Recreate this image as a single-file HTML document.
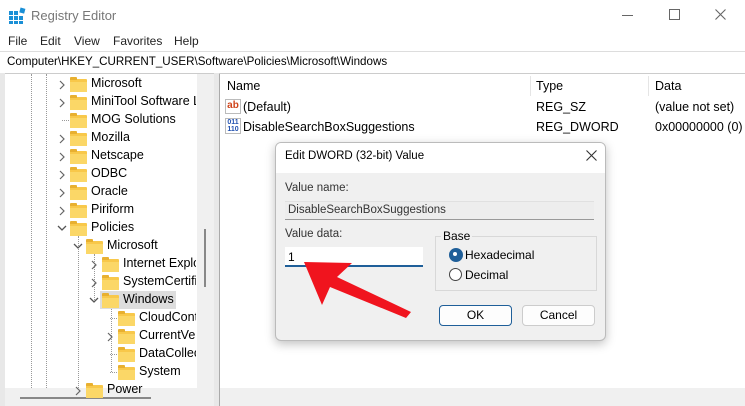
<!DOCTYPE html><html><head><style>
body{margin:0;width:745px;height:406px;overflow:hidden;background:#fff;font-family:"Liberation Sans",sans-serif;font-size:11.5px;color:#000;position:relative}
.a{position:absolute;white-space:nowrap}
.f{position:absolute;width:17px;height:13px;background:#f8c84a;border-radius:1px}
.f:before{content:"";position:absolute;left:0;top:-2px;width:7px;height:3px;background:#e8b030;border-radius:1px 1px 0 0}
.f:after{content:"";position:absolute;left:0;top:3px;width:17px;height:10px;background:#fbd767}
.c{position:absolute;font-size:10px;color:#666}
.dot{position:absolute;border-left:1px dotted #999}
</style></head><body>
<svg class="a" style="left:8px;top:7px" width="18" height="18"><g fill="#1a8fd6"><rect x="1" y="4" width="4" height="4"/><rect x="6" y="4" width="4" height="4"/><rect x="1" y="9" width="4" height="4"/><rect x="6" y="9" width="4" height="4"/><rect x="11" y="9" width="4" height="4"/><rect x="1" y="14" width="4" height="3"/><rect x="6" y="14" width="4" height="3"/><rect x="11" y="14" width="4" height="3"/><rect x="12" y="1" width="5" height="5" transform="rotate(15 14 3)"/></g></svg>
<div class="a" style="left:31px;top:8px;font-size:13px;color:#777">Registry Editor</div>
<div class="a" style="left:622px;top:15px;width:11px;height:1px;background:#666"></div>
<div class="a" style="left:669px;top:9px;width:9px;height:9px;border:1px solid #666"></div>
<svg class="a" style="left:715px;top:9px" width="11" height="11"><path d="M0.5 0.5L10.5 10.5M10.5 0.5L0.5 10.5" stroke="#666" stroke-width="1.1"/></svg>
<div class="a" style="left:8px;top:34px;font-size:12px;color:#222">File</div>
<div class="a" style="left:40px;top:34px;font-size:12px;color:#222">Edit</div>
<div class="a" style="left:74px;top:34px;font-size:12px;color:#222">View</div>
<div class="a" style="left:113px;top:34px;font-size:12px;color:#222">Favorites</div>
<div class="a" style="left:174px;top:34px;font-size:12px;color:#222">Help</div>
<div class="a" style="left:0;top:51px;width:745px;height:21px;border-top:1px solid #ddd;border-bottom:1px solid #ccc"></div>
<div class="a" style="left:7px;top:55px;font-size:11.6px">Computer\HKEY_CURRENT_USER\Software\Policies\Microsoft\Windows</div>
<div class="a" style="left:0;top:73px;width:5px;height:333px;background:#e8e8e8"></div>
<div class="a" style="left:214px;top:73px;width:5px;height:333px;background:#e8e8e8"></div>
<div class="a" style="left:197px;top:74px;width:17px;height:314px;background:#f0f0f0"></div>
<div class="a" style="left:204px;top:229px;width:2px;height:58px;background:#888"></div>
<div class="a" style="left:5px;top:388px;width:209px;height:18px;background:#f0f0f0"></div>
<div class="a" style="left:20px;top:397px;width:131px;height:2px;background:#888"></div>
<div class="a" style="left:219px;top:388px;width:526px;height:18px;background:#f0f0f0;border-left:1px solid #aaa"></div>
<div class="a" style="left:219px;top:74px;width:1px;height:314px;background:#aaa"></div>
<div class="a" style="left:530px;top:76px;width:1px;height:20px;background:#e5e5e5"></div>
<div class="a" style="left:648px;top:76px;width:1px;height:20px;background:#e5e5e5"></div>
<div class="a" style="left:227px;top:79px;font-size:12.5px">Name</div>
<div class="a" style="left:536px;top:79px;font-size:12.5px">Type</div>
<div class="a" style="left:655px;top:79px;font-size:12.5px">Data</div>
<div class="a" style="left:225px;top:99px;width:14px;height:13px;border:1px solid #bbb;background:#fff;color:#d0441a;font-size:10px;font-weight:bold;line-height:12px;text-align:center">ab</div>
<div class="a" style="left:225px;top:118px;width:14px;height:14px;border:1px solid #bbb;background:#fff;color:#2050b0;font-size:7px;font-weight:bold;line-height:7px;text-align:center">011<br>110</div>
<div class="a" style="left:243px;top:100px;font-size:12.5px">(Default)</div>
<div class="a" style="left:243px;top:120px;font-size:12.5px">DisableSearchBoxSuggestions</div>
<div class="a" style="left:536px;top:100px;font-size:12.5px">REG_SZ</div>
<div class="a" style="left:536px;top:120px;font-size:12.5px">REG_DWORD</div>
<div class="a" style="left:655px;top:100px;font-size:12.5px">(value not set)</div>
<div class="a" style="left:655px;top:120px;font-size:12.5px">0x00000000 (0)</div>
<div class="dot" style="left:31px;top:74px;height:314px"></div>
<div class="dot" style="left:46px;top:74px;height:314px"></div>
<div class="dot" style="left:78px;top:236px;height:152px"></div>
<div class="dot" style="left:94px;top:254px;height:46px"></div>
<div class="dot" style="left:111px;top:308px;height:64px"></div>
<div class="a" style="left:100px;top:291px;width:76px;height:18px;background:#ddd"></div>
<div id="t"></div>
<script>
var rows=[[1,'Microsoft',1],[1,'MiniTool Software L',1],[1,'MOG Solutions',0],[1,'Mozilla',1],[1,'Netscape',1],[1,'ODBC',1],[1,'Oracle',1],[1,'Piriform',1],[1,'Policies',2],[2,'Microsoft',2],[3,'Internet Explo',1],[3,'SystemCertific',1],[3,'Windows',2],[4,'CloudCont',0],[4,'CurrentVer',1],[4,'DataCollec',0],[4,'System',0],[2,'Power',1]];
var h='';rows.forEach(function(r,i){var y=84+i*18,x=70+(r[0]-1)*16;
if(r[2]==1)h+='<svg class="a" style="left:'+(x-11)+'px;top:'+(y-4)+'px" width="6" height="10"><path d="M1 1L5 5L1 9" stroke="#666" fill="none" stroke-width="1.2"/></svg>';
if(r[2]==2)h+='<svg class="a" style="left:'+(x-13)+'px;top:'+(y-3)+'px" width="10" height="6"><path d="M1 1L5 5L9 1" stroke="#555" fill="none" stroke-width="1.3"/></svg>';
if(r[2]==0)h+='<div class="a" style="left:'+(x-8)+'px;top:'+y+'px;width:7px;border-top:1px dotted #999"></div>';
h+='<div class="f" style="left:'+x+'px;top:'+(y-5)+'px"></div><div class="a" style="left:'+(x+21)+'px;top:'+(y-8)+'px;font-size:12.5px;width:'+(196-x-21)+'px;overflow:hidden">'+r[1]+'</div>';});
document.getElementById('t').innerHTML=h;
</script>
<div class="a" style="left:197px;top:380px;width:17px;height:8px;background:#f0f0f0"></div>
<div class="a" style="left:275px;top:142px;width:329px;height:197px;background:#f0f0f0;border:1px solid #bbb;border-radius:6px;box-shadow:0 3px 10px rgba(0,0,0,.25);overflow:hidden">
<div style="height:30px;background:#fff"></div></div>
<div class="a" style="left:285px;top:150px;font-size:11.5px">Edit DWORD (32-bit) Value</div>
<svg class="a" style="left:586px;top:150px" width="11" height="11"><path d="M0.5 0.5L10.5 10.5M10.5 0.5L0.5 10.5" stroke="#333" stroke-width="1.1"/></svg>
<div class="a" style="left:285px;top:182px;color:#333">Value name:</div>
<div class="a" style="left:285px;top:201px;width:309px;height:17px;background:#ededed;border-bottom:1px solid #999;border-top:1px solid #e0e0e0"></div>
<div class="a" style="left:288px;top:204px;color:#333">DisableSearchBoxSuggestions</div>
<div class="a" style="left:285px;top:228px;color:#333">Value data:</div>
<div class="a" style="left:285px;top:247px;width:138px;height:18px;background:#fff;border-bottom:2px solid #1f5f99"></div>
<div class="a" style="left:288px;top:250px;font-size:12px">1</div>
<div class="a" style="left:435px;top:236px;width:160px;height:53px;border:1px solid #d8d8d8"></div>
<div class="a" style="left:441px;top:229px;padding:0 2px;background:#f0f0f0;font-size:12px">Base</div>
<div class="a" style="left:449px;top:248px;width:10px;height:10px;border-radius:50%;border:2px solid #1f5f99;background:#1f5f99"></div>
<div class="a" style="left:453px;top:252px;width:4px;height:4px;border-radius:50%;background:#fff"></div>
<div class="a" style="left:449px;top:268px;width:11px;height:11px;border-radius:50%;border:1px solid #444;background:#fff"></div>
<div class="a" style="left:465px;top:248px;font-size:12px">Hexadecimal</div>
<div class="a" style="left:465px;top:268px;font-size:12px">Decimal</div>
<div class="a" style="left:439px;top:305px;width:71px;height:19px;background:#fdfdfd;border:1px solid #1f5f99;border-radius:4px;text-align:center;line-height:19px;font-size:12px">OK</div>
<div class="a" style="left:522px;top:305px;width:71px;height:19px;background:#fdfdfd;border:1px solid #ccc;border-radius:4px;text-align:center;line-height:19px;font-size:12px">Cancel</div>
<svg class="a" style="left:0;top:0" width="745" height="406"><polygon points="304,262 352,263 337,277 411,312 406,318 330,287 322,305" fill="#f0141e"/></svg>
</body></html>
